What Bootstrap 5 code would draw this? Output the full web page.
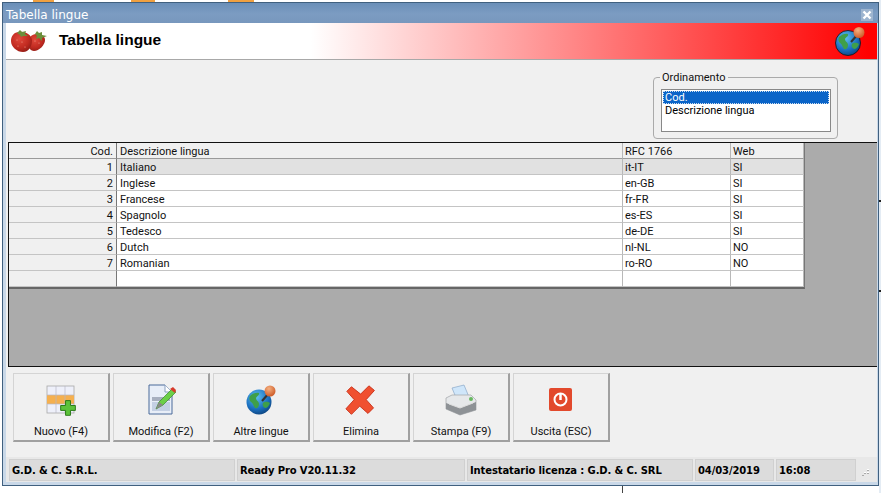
<!DOCTYPE html>
<html lang="it">
<head>
<meta charset="utf-8">
<title>Tabella lingue</title>
<link href="https://cdn.jsdelivr.net/npm/bootstrap@5.3.0/dist/css/bootstrap.min.css" rel="stylesheet">
<style>
html,body{height:493px;overflow:hidden;background:#fff;}
body{position:relative;font-family:Roboto,"Liberation Sans",sans-serif;font-size:11px;color:#000;}
.desk-bit{position:absolute;top:0;height:2px;background:#f0a040;}
.desk-line{position:absolute;left:622px;top:486px;width:1px;height:7px;background:#444;}
.desk-side{position:absolute;left:879px;top:0;width:2px;height:493px;background:#e4ecf4;}
.desk-tick{position:absolute;left:879px;width:2px;height:2px;background:#222;}
.gw-window{position:absolute;left:2px;top:2px;width:877px;height:484px;border:1px solid #40607f;background:#c9d8e8;padding:0 1px 3px 3px;display:flex;flex-direction:column;}
.gw-title{height:20px;flex:none;margin:0 -1px 0 -3px;padding:3px 5px 0 3px;background:linear-gradient(#6a8fb8,#7c9cc2 55%,#7797bd);color:#fff;font-family:"DejaVu Sans",sans-serif;font-size:12px;line-height:17px;}
.gw-title-text{padding-top:2px;}
.gw-close-box{width:12px;height:12px;background:#9db4cf;display:flex;align-items:center;justify-content:center;}
.gw-close{width:10px;height:10px;display:block;}
.gw-panel{flex:1;background:#f0f0f0;display:flex;flex-direction:column;min-height:0;}
.gw-head{height:37px;flex:none;border-bottom:1px solid #a8a8a8;background:linear-gradient(90deg,#fff 0,#fff 35%,#f00 99%);padding:0 12px 0 4px;}
.gw-head-title{font-family:"Liberation Sans",sans-serif;font-size:15.5px;font-weight:bold;margin:-2px 0 0 11px;}
.gw-sort-row{height:82px;flex:none;padding:17px 39px 0 0;justify-content:flex-end;}
.gw-sort{position:relative;width:185px;height:62px;border:1px solid #aaa;border-radius:4px;padding:11px 6px 0 7px;}
.gw-sort-label{position:absolute;left:6px;top:-6px;background:#f0f0f0;padding:0 3px 0 2px;line-height:12px;font-size:11px;color:#111;}
.gw-list{height:43px;border:1px solid #888;background:#fff;padding:1px 1px;line-height:13px;}
.gw-sel{background:#0a64c8;color:#fff;outline:1px dotted #cde;outline-offset:-1px;padding-left:2px;height:13px;}
.gw-opt{padding-left:2px;}
.gw-grid{height:225px;flex:none;margin:0 0 0 2px;background:#ababab;border-top:1px solid #111;border-left:1px solid #111;border-bottom:1px solid #111;overflow:hidden;}
.gw-table{width:796px;table-layout:fixed;border-collapse:separate;border-spacing:0;margin:0;background:#fff;border-right:1px solid #777;border-bottom:2px solid #666;}
.gw-table td,.gw-table th{height:16px;padding:2px 2px 0 3px;font-weight:normal;font-size:11px;line-height:13px;border:0;border-right:1px solid #b8b8b8;border-bottom:1px solid #c4c4c4;white-space:nowrap;color:#111;background:#fff;box-shadow:none;}
.gw-table td:nth-child(n+3),.gw-table th:nth-child(n+3){padding-left:2px;}
.gw-table th{background:#f0f0f0;border-bottom:1px solid #9a9a9a;}
.gw-table .gw-num{background:#f0f0f0;text-align:right;padding-right:3px;border-right:1px solid #777;}
.gw-table tr.gw-cur td{background:#e1e1e1;}
.gw-table tr.gw-cur td.gw-num{background:#f0f0f0;}
.gw-btns{gap:3px;padding:6px 0 0 7px;height:90px;flex:none;}
.gw-btn{width:97px;height:69px;padding:0;border-radius:0;background:#f0f0f0;border:1px solid #d4d4d4;border-right:2px solid #a0a0a0;border-bottom:2px solid #a0a0a0;font-size:11px;color:#111;display:flex;flex-direction:column;align-items:center;}
.gw-btn svg{display:block;margin-top:9px;height:34px;width:34px;flex:none;}
.gw-btn span{margin-top:8px;line-height:13px;}
.gw-status{height:25px;flex:none;background:#e8e8e8;padding:2px 3px 1px 3px;gap:2px;font-family:"DejaVu Sans",sans-serif;font-weight:bold;font-size:10px;letter-spacing:-.12px;}
.gw-cell{background:#dcdcdc;border:1px solid #d0d0d0;line-height:21px;padding-left:2px;height:22px;white-space:nowrap;overflow:hidden;}
.gw-grip{margin:10px 0 0 4px;display:block;}
</style>
</head>
<body>
<div class="desk-bit" style="left:33px;width:21px"></div>
<div class="desk-bit" style="left:131px;width:24px"></div>
<div class="desk-bit" style="left:228px;width:26px"></div>
<div class="desk-side"></div>
<div class="desk-tick" style="top:200px"></div>
<div class="desk-tick" style="top:290px"></div>
<div class="desk-line"></div>

<div class="gw-window">
  <div class="gw-title d-flex align-items-center justify-content-between">
    <span class="gw-title-text">Tabella lingue</span>
    <span class="gw-close-box">
      <svg class="gw-close" viewBox="0 0 10 10"><path d="M1.5 1.5L8.500 8.500M8.500 1.500L1.500 8.500" stroke="#fff" stroke-width="2.400"/></svg>
    </span>
  </div>
  <div class="gw-panel">
    <div class="gw-head d-flex align-items-center">
      <svg width="38" height="26" viewBox="0 0 38 26">
        <defs>
          <radialGradient id="sb" cx=".4" cy=".35" r=".75"><stop offset="0" stop-color="#e0483a"/><stop offset=".6" stop-color="#c02a20"/><stop offset="1" stop-color="#8a1a14"/></radialGradient>
        </defs>
        <path d="M26 6c5 0 9 2 9 6 0 5-6 11-11 11-4 0-6-4-6-9 0-4 4-8 8-8z" fill="url(#sb)"/>
        <path d="M9 4c7-1 12 3 13 8 0 6-3 12-9 12C7 24 1 19 1 13 1 8 4 4 9 4z" fill="url(#sb)"/>
        <path d="M7 5l3-3 2 2 4-1-1 3 3 2-5 0-2 1-1-2zM25 6l2-3 2 2 3-1 0 3 5 1-5 2 0 3-3-3-3 1 1-3z" fill="#6b8f3c"/>
        <g fill="#f0a090"><circle cx="7" cy="12" r=".6"/><circle cx="12" cy="14" r=".6"/><circle cx="8" cy="18" r=".6"/><circle cx="15" cy="19" r=".6"/><circle cx="25" cy="13" r=".6"/><circle cx="29" cy="15" r=".6"/></g>
      </svg>
      <span class="gw-head-title flex-grow-1">Tabella lingue</span>
      <svg width="30" height="30" viewBox="0 0 30 30">
        <defs>
          <radialGradient id="gl" cx=".4" cy=".3" r=".8"><stop offset="0" stop-color="#60c0f0"/><stop offset=".6" stop-color="#1a6fc0"/><stop offset="1" stop-color="#0c3b70"/></radialGradient>
          <radialGradient id="pn" cx=".4" cy=".3" r=".8"><stop offset="0" stop-color="#f5b080"/><stop offset="1" stop-color="#c8501c"/></radialGradient>
        </defs>
        <circle cx="13" cy="17" r="12.500" fill="url(#gl)" stroke="#111" stroke-width=".8"/>
        <path d="M4 11c3-3 7-4 9-3 1 2-2 3-3 5 0 3 3 3 3 6 0 3-2 5-4 4-2-3-2-5-4-6-2-2-2-4-1-6zM17 18c3-2 5-1 7 0-1 3-3 5-5 5-2-1-3-3-2-5z" fill="#3f9f4a"/>
        <path d="M16 16l7-8" stroke="#333" stroke-width="2"/>
        <circle cx="24" cy="6.500" r="5.500" fill="url(#pn)"/>
      </svg>
    </div>

    <div class="gw-sort-row d-flex">
      <div class="gw-sort">
        <span class="gw-sort-label">Ordinamento</span>
        <div class="gw-list">
          <div class="gw-sel">Cod.</div>
          <div class="gw-opt">Descrizione lingua</div>
        </div>
      </div>
    </div>

    <div class="gw-grid">
      <table class="table gw-table">
        <colgroup><col style="width:108px"><col style="width:506px"><col style="width:108px"><col style="width:73px"></colgroup>
        <thead><tr><th class="gw-num">Cod.</th><th>Descrizione lingua</th><th>RFC 1766</th><th>Web</th></tr></thead>
        <tbody>
          <tr class="gw-cur"><td class="gw-num">1</td><td>Italiano</td><td>it-IT</td><td>SI</td></tr>
          <tr><td class="gw-num">2</td><td>Inglese</td><td>en-GB</td><td>SI</td></tr>
          <tr><td class="gw-num">3</td><td>Francese</td><td>fr-FR</td><td>SI</td></tr>
          <tr><td class="gw-num">4</td><td>Spagnolo</td><td>es-ES</td><td>SI</td></tr>
          <tr><td class="gw-num">5</td><td>Tedesco</td><td>de-DE</td><td>SI</td></tr>
          <tr><td class="gw-num">6</td><td>Dutch</td><td>nl-NL</td><td>NO</td></tr>
          <tr><td class="gw-num">7</td><td>Romanian</td><td>ro-RO</td><td>NO</td></tr>
          <tr><td class="gw-num"></td><td></td><td></td><td></td></tr>
        </tbody>
      </table>
    </div>

    <div class="gw-btns d-flex">
      <button type="button" class="btn gw-btn">
        <svg viewBox="0 0 34 34">
          <rect x="3" y="3" width="27" height="27" fill="#eef0fa" stroke="#a8a8a8" stroke-width=".8"/>
          <rect x="3" y="12" width="27" height="9" fill="#f5b050"/>
          <path d="M12 3v27M21 3v27M3 12h27M3 21h27" stroke="#b8b8c4" stroke-width=".7"/>
          <path d="M22 20h5v5h5v5h-5v5h-5v-5h-5v-5h5z" transform="translate(0 -2) scale(.98)" fill="#5cc23a" stroke="#2a7a18" stroke-width="1"/>
        </svg>
        <span>Nuovo (F4)</span>
      </button>
      <button type="button" class="btn gw-btn">
        <svg viewBox="0 0 34 34">
          <path d="M5 2h16l7 7v22H5z" fill="#e8eef8" stroke="#4a6a9a"/>
          <path d="M21 2v7h7" fill="#fff" stroke="#8aa0c0"/>
          <rect x="8" y="14" width="18" height="4" fill="#a8b0c0"/>
          <rect x="8" y="19" width="18" height="9" fill="#c4d0e4"/>
          <path d="M12 26l3-7 13-13 4 3-13 13z" fill="#6ccf48" stroke="#3a8a28" stroke-width=".7"/>
          <path d="M26 6l3-2 3 3-1 3z" fill="#d63a2a"/>
          <path d="M12 26l3-7 4 3z" fill="#888"/>
        </svg>
        <span>Modifica (F2)</span>
      </button>
      <button type="button" class="btn gw-btn">
        <svg viewBox="0 0 34 34">
          <circle cx="15" cy="19" r="12.500" fill="url(#gl)"/>
          <path d="M6 13c3-3 7-4 9-3 1 2-2 3-3 5 0 3 3 3 3 6 0 3-2 5-4 4-2-3-2-5-4-6-2-2-2-4-1-6zM19 20c3-2 5-1 7 0-1 3-3 5-5 5-2-1-3-3-2-5z" fill="#3f9f4a"/>
          <path d="M18 18l7-8" stroke="#333" stroke-width="2"/>
          <circle cx="26" cy="8" r="5.500" fill="url(#pn)"/>
        </svg>
        <span>Altre lingue</span>
      </button>
      <button type="button" class="btn gw-btn">
        <svg viewBox="0 0 34 34">
          <path d="M7 3l10 8 9-9 6 5-9 10 8 9-6 6-9-8-9 9-6-6 9-10-8-9z" transform="translate(1 1) scale(.92)" fill="#f05030" stroke="#c83018" stroke-width="1" stroke-linejoin="round"/>
        </svg>
        <span>Elimina</span>
      </button>
      <button type="button" class="btn gw-btn">
        <svg viewBox="0 0 34 34">
          <path d="M8 5l12-3 5 12-12 3z" fill="#cfe6fa" stroke="#8aa8c8" stroke-width=".7"/>
          <path d="M2 15l6-3 19 0 5 5v10l-16 5-14-6z" fill="#e6e8ea" stroke="#a0a4a8" stroke-width=".7"/>
          <path d="M2 20l14 5 16-6v8l-16 5-14-6z" fill="#8e9296"/>
          <path d="M5 21l11 4 13-5" stroke="#ddd" stroke-width="1" fill="none"/>
          <circle cx="27" cy="16" r="2" fill="#68b860"/>
        </svg>
        <span>Stampa (F9)</span>
      </button>
      <button type="button" class="btn gw-btn">
        <svg viewBox="0 0 34 34">
          <rect x="5" y="5" width="23" height="23" rx="2" fill="#e2492c"/>
          <circle cx="16.500" cy="16.500" r="6" fill="none" stroke="#fff" stroke-width="2"/>
          <path d="M16.500 11v6" stroke="#fff" stroke-width="2.500"/>
        </svg>
        <span>Uscita (ESC)</span>
      </button>
    </div>

    <div class="gw-status d-flex">
      <div class="gw-cell" style="width:226px">G.D. &amp; C. S.R.L.</div>
      <div class="gw-cell" style="width:228px">Ready Pro V20.11.32</div>
      <div class="gw-cell" style="width:226px">Intestatario licenza : G.D. &amp; C. SRL</div>
      <div class="gw-cell" style="width:79px">04/03/2019</div>
      <div class="gw-cell" style="width:80px">16:08</div>
      <svg class="gw-grip" width="8" height="8" viewBox="0 0 8 8"><path d="M5 0h2v2H5zM2 3h2v2H2zM5 3h2v2H5z" fill="#fff"/><path d="M5 1h2v1H5zM2 4h2v1H2zM5 4h2v1H5zM0 6h2v1H0z" fill="#aaa"/></svg>
    </div>
  </div>
</div>
</body>
</html>
